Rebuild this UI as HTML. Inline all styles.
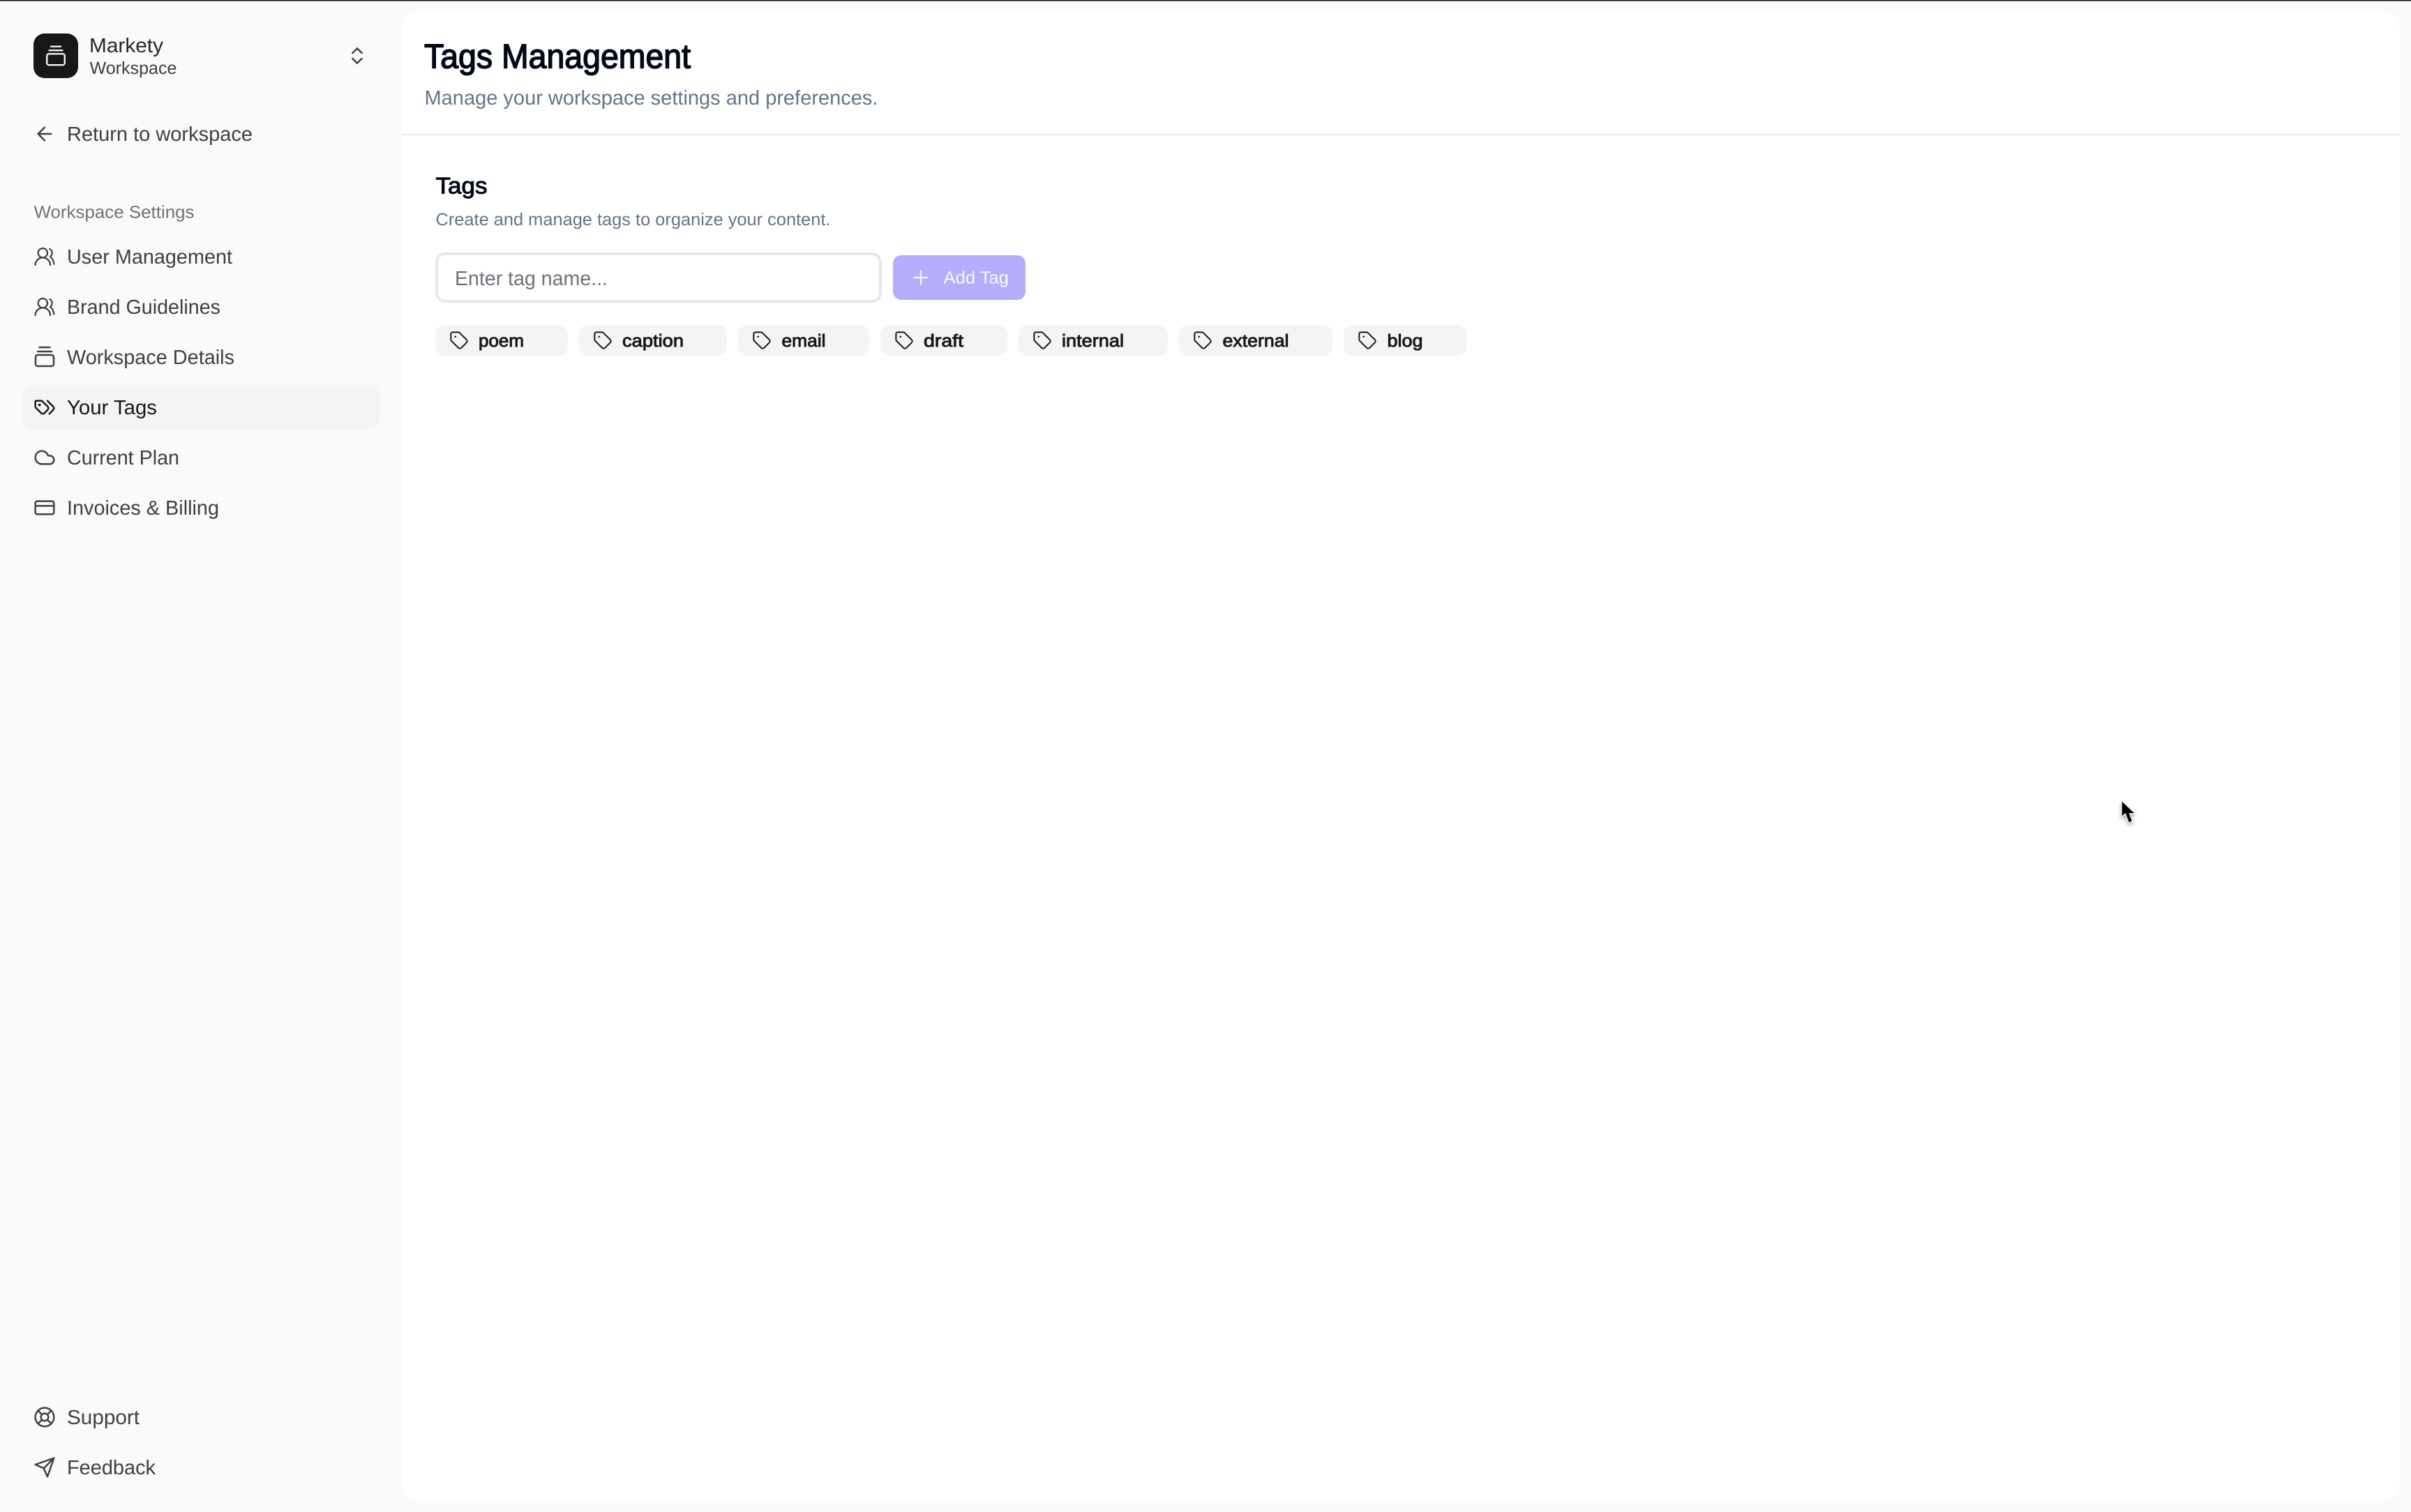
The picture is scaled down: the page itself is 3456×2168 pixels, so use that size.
<!DOCTYPE html>
<html lang="en">
<head>
<meta charset="utf-8">
<title>Tags Management</title>
<style>
html,body{margin:0;padding:0;background:#fafafa;width:3456px;height:2168px;overflow:hidden}
svg{display:block}
text{font-family:"Liberation Sans",sans-serif;text-rendering:geometricPrecision;white-space:pre}
.nav{font-size:29px;fill:#3f3f46}
.ic{fill:none;stroke:#3f3f46;stroke-width:1.85;stroke-linecap:round;stroke-linejoin:round}
.tg{fill:none;stroke:#18181b;stroke-width:1.7;stroke-linecap:round;stroke-linejoin:round}
.tt{font-size:25px;fill:#18181b;stroke:#18181b;stroke-width:.9}
.tb{fill:#f4f4f5}
</style>
</head>
<body>
<svg xmlns="http://www.w3.org/2000/svg" width="3456" height="2168" viewBox="0 0 3456 2168">
<defs>
<symbol id="tag" viewBox="0 0 24 24" overflow="visible">
<path class="tg" d="M12.586 2.586A2 2 0 0 0 11.172 2H4a2 2 0 0 0-2 2v7.172a2 2 0 0 0 .586 1.414l8.704 8.704a2.426 2.426 0 0 0 3.42 0l6.58-6.58a2.426 2.426 0 0 0 0-3.42z"/>
<circle cx="7.5" cy="7.5" r=".6" fill="#18181b" stroke="#18181b" stroke-width="1"/>
</symbol>
<symbol id="users" viewBox="0 0 24 24" overflow="visible">
<path class="ic" style="stroke-width:1.7" d="M18 21a8 8 0 0 0-16 0"/><circle class="ic" style="stroke-width:1.7" cx="10" cy="8" r="5"/><path class="ic" style="stroke-width:1.7" d="M22 20c0-3.37-2-6.5-4-8a5 5 0 0 0-.45-8.3"/>
</symbol>
<filter id="cs" x="-50%" y="-50%" width="200%" height="200%"><feDropShadow dx="0" dy="3" stdDeviation="3" flood-color="#000" flood-opacity=".35"/></filter>
</defs>

<rect width="3456" height="2168" fill="#fafafa"/>
<rect x="0" y="0" width="3456" height="1.6" fill="#1c1c1c"/>

<!-- main panel -->
<rect x="576" y="16" width="2864" height="2136" rx="24" fill="#fff"/>
<rect x="576" y="192" width="2864" height="2" fill="#e2e8f0"/>

<!-- workspace switcher -->
<rect x="48" y="48" width="64" height="64" rx="16" fill="#18181b"/>
<g fill="none" stroke="#fff" stroke-width="2.4" stroke-linecap="round" stroke-opacity=".95">
<path d="M73 66.7h14M70.5 72.2h19"/>
<rect x="67.2" y="77.2" width="25.6" height="16" rx="3"/>
</g>
<text x="128" y="75" font-size="29" fill="#27272a" textLength="106" lengthAdjust="spacingAndGlyphs">Markety</text>
<text x="128.5" y="106" font-size="25" fill="#3f3f46" textLength="125" lengthAdjust="spacingAndGlyphs">Workspace</text>
<svg x="496" y="64" width="32" height="32" viewBox="0 0 24 24"><path class="ic" d="m7 15 5 5 5-5"/><path class="ic" d="m7 9 5-5 5 5"/></svg>

<!-- return -->
<svg x="48" y="176" width="32" height="32" viewBox="0 0 24 24"><path class="ic" d="m12 19-7-7 7-7"/><path class="ic" d="M19 12H5"/></svg>
<text class="nav" x="96" y="202" textLength="266" lengthAdjust="spacingAndGlyphs">Return to workspace</text>

<text x="48.5" y="312.5" font-size="25" fill="#71717a" textLength="230" lengthAdjust="spacingAndGlyphs">Workspace Settings</text>

<!-- nav -->
<use href="#users" x="48" y="352" width="32" height="32"/>
<text class="nav" x="96" y="378" textLength="237" lengthAdjust="spacingAndGlyphs">User Management</text>
<use href="#users" x="48" y="424" width="32" height="32"/>
<text class="nav" x="96" y="450" textLength="220" lengthAdjust="spacingAndGlyphs">Brand Guidelines</text>

<g fill="none" stroke="#3f3f46" stroke-width="2.5" stroke-linecap="round">
<path d="M56.5 498h15M54 504h20"/>
<rect x="51" y="509" width="26" height="16" rx="3"/>
</g>
<text class="nav" x="96" y="522" textLength="240" lengthAdjust="spacingAndGlyphs">Workspace Details</text>

<rect x="32" y="552" width="512" height="64" rx="16" fill="#f4f4f5"/>
<svg x="48" y="568" width="32" height="32" viewBox="0 0 24 24"><g class="ic" style="stroke:#18181b"><path d="m15 5 6.3 6.3a2.4 2.4 0 0 1 0 3.4L17 19"/><path d="M9.586 5.586A2 2 0 0 0 8.172 5H3a1 1 0 0 0-1 1v5.172a2 2 0 0 0 .586 1.414L8.29 18.29a2.426 2.426 0 0 0 3.42 0l3.58-3.58a2.426 2.426 0 0 0 0-3.42z"/><circle cx="6.5" cy="9.5" r=".5" fill="#18181b"/></g></svg>
<text class="nav" style="fill:#18181b" x="96" y="594" textLength="129" lengthAdjust="spacingAndGlyphs">Your Tags</text>

<svg x="48" y="640" width="32" height="32" viewBox="0 0 24 24"><path class="ic" d="M17.5 19H9a7 7 0 1 1 6.71-9h1.79a4.5 4.5 0 1 1 0 9Z"/></svg>
<text class="nav" x="96" y="666" textLength="161" lengthAdjust="spacingAndGlyphs">Current Plan</text>

<svg x="48" y="712" width="32" height="32" viewBox="0 0 24 24"><rect class="ic" x="2" y="5" width="20" height="14" rx="2"/><path class="ic" d="M2 10h20"/></svg>
<text class="nav" x="96" y="738" textLength="218" lengthAdjust="spacingAndGlyphs">Invoices &amp; Billing</text>

<!-- footer nav -->
<svg x="48" y="2016" width="32" height="32" viewBox="0 0 24 24"><circle class="ic" cx="12" cy="12" r="10"/><circle class="ic" cx="12" cy="12" r="4"/><path class="ic" d="m4.93 4.93 4.24 4.24M14.83 9.17l4.24-4.24M14.83 14.83l4.24 4.24M9.17 14.83l-4.24 4.24"/></svg>
<text class="nav" x="96" y="2042" textLength="104" lengthAdjust="spacingAndGlyphs">Support</text>
<svg x="48" y="2088" width="32" height="32" viewBox="0 0 24 24"><path class="ic" d="m22 2-7 20-4-9-9-4Z"/><path class="ic" d="M22 2 11 13"/></svg>
<text class="nav" x="96" y="2114" textLength="127" lengthAdjust="spacingAndGlyphs">Feedback</text>

<!-- header -->
<text x="608" y="97.5" font-size="49" fill="#020817" stroke="#020817" stroke-width="1.5" textLength="382" lengthAdjust="spacingAndGlyphs">Tags Management</text>
<text x="608.5" y="150" font-size="29" fill="#64748b" textLength="650" lengthAdjust="spacingAndGlyphs">Manage your workspace settings and preferences.</text>

<!-- tags section -->
<text x="624.5" y="277.5" font-size="33" fill="#020817" stroke="#020817" stroke-width="1" textLength="74" lengthAdjust="spacingAndGlyphs">Tags</text>
<text x="624.5" y="323" font-size="25" fill="#64748b" textLength="566" lengthAdjust="spacingAndGlyphs">Create and manage tags to organize your content.</text>

<rect x="626" y="364" width="636" height="68" rx="12" fill="#fff" stroke="#e2e8f0" stroke-width="4"/>
<text x="652" y="409" font-size="29" fill="#71717a" textLength="219" lengthAdjust="spacingAndGlyphs">Enter tag name...</text>

<rect x="1280" y="366" width="190" height="64" rx="12" fill="#b5adfb"/>
<path d="M1320 388.5v19M1310.5 398h19" stroke="#fff" stroke-width="2.2" stroke-linecap="round" fill="none" stroke-opacity=".9"/>
<text x="1352.5" y="406.5" font-size="25" fill="#fff" fill-opacity=".92" textLength="93.5" lengthAdjust="spacingAndGlyphs">Add Tag</text>

<!-- tag chips -->
<rect class="tb" x="624" y="466" width="190" height="44" rx="13"/>
<use href="#tag" x="644" y="474" width="28" height="28"/>
<text class="tt" x="686" y="497" textLength="65" lengthAdjust="spacingAndGlyphs">poem</text>

<rect class="tb" x="830" y="466" width="212" height="44" rx="13"/>
<use href="#tag" x="850" y="474" width="28" height="28"/>
<text class="tt" x="892" y="497" textLength="88" lengthAdjust="spacingAndGlyphs">caption</text>

<rect class="tb" x="1058" y="466" width="188" height="44" rx="13"/>
<use href="#tag" x="1078" y="474" width="28" height="28"/>
<text class="tt" x="1120.5" y="497" textLength="63" lengthAdjust="spacingAndGlyphs">email</text>

<rect class="tb" x="1262" y="466" width="182" height="44" rx="13"/>
<use href="#tag" x="1282" y="474" width="28" height="28"/>
<text class="tt" x="1324" y="497" textLength="57" lengthAdjust="spacingAndGlyphs">draft</text>

<rect class="tb" x="1460" y="466" width="214" height="44" rx="13"/>
<use href="#tag" x="1480" y="474" width="28" height="28"/>
<text class="tt" x="1522" y="497" textLength="89" lengthAdjust="spacingAndGlyphs">internal</text>

<rect class="tb" x="1690" y="466" width="220" height="44" rx="13"/>
<use href="#tag" x="1710" y="474" width="28" height="28"/>
<text class="tt" x="1752.5" y="497" textLength="95" lengthAdjust="spacingAndGlyphs">external</text>

<rect class="tb" x="1926" y="466" width="176" height="44" rx="13"/>
<use href="#tag" x="1946" y="474" width="28" height="28"/>
<text class="tt" x="1988.5" y="497" textLength="51" lengthAdjust="spacingAndGlyphs">blog</text>

<!-- cursor -->
<path filter="url(#cs)" d="M3041.7 1149.3V1170L3046.7 1165.7L3051.7 1179.3L3056 1177.3L3051.7 1166H3059.3Z" fill="#000" stroke="#fff" stroke-width="2.4" stroke-linejoin="round" paint-order="stroke"/>
</svg>
</body>
</html>
